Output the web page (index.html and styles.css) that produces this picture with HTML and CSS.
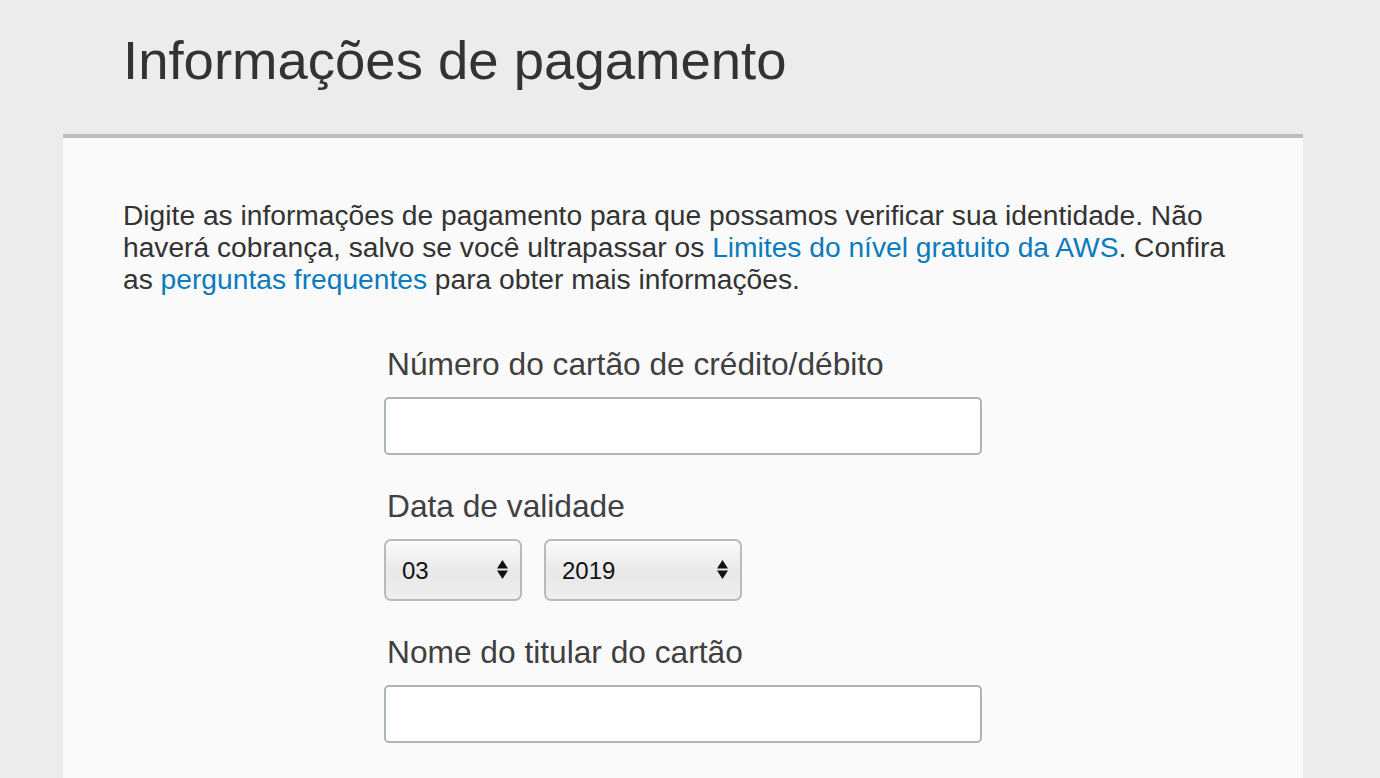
FILE: index.html
```html
<!DOCTYPE html>
<html lang="pt-BR">
<head>
<meta charset="utf-8">
<title>Informações de pagamento</title>
<link rel="stylesheet" href="styles.css">
</head>
<body>
<div class="page">
  <header class="header">
    <h1 class="title">Informações de pagamento</h1>
  </header>
  <main class="panel">
    <p class="intro">Digite as informações de pagamento para que possamos verificar sua identidade. Não haverá cobrança, salvo se você ultrapassar os <a href="#" class="link">Limites do nível gratuito da AWS</a>. Confira as <a href="#" class="link">perguntas frequentes</a> para obter mais informações.</p>
    <form class="form">
      <label class="label" for="card">Número do cartão de crédito/débito</label>
      <input class="field" id="card" type="text">
      <label class="label">Data de validade</label>
      <div class="selects">
        <div class="select-wrap month">
          <select class="select"><option>03</option></select>
          <span class="arrows"><svg width="11" height="19" viewBox="0 0 11 19"><path d="M5.5 0 L11 8.5 L0 8.5 Z M5.5 19 L11 10.5 L0 10.5 Z" fill="#111"/></svg></span>
        </div>
        <div class="select-wrap year">
          <select class="select"><option>2019</option></select>
          <span class="arrows"><svg width="11" height="19" viewBox="0 0 11 19"><path d="M5.5 0 L11 8.5 L0 8.5 Z M5.5 19 L11 10.5 L0 10.5 Z" fill="#111"/></svg></span>
        </div>
      </div>
      <label class="label" for="name">Nome do titular do cartão</label>
      <input class="field" id="name" type="text">
    </form>
  </main>
</div>
</body>
</html>
```
FILE: styles.css
```css
html, body {
  margin: 0;
  padding: 0;
  background: #ebeceb;
  font-family: "Liberation Sans", Arial, sans-serif;
  height: 100%;
}
.page {
  display: flex;
  flex-direction: column;
  min-height: 100%;
}
.header {
  height: 134px;
  padding-left: 123px;
  box-sizing: border-box;
}
.title {
  margin: 0;
  padding-top: 27px;
  font-size: 54.5px;
  line-height: 68px;
  font-weight: normal;
  color: #333;
}
.panel {
  margin-left: 63px;
  width: 1240px;
  flex: 1;
  background: #fafafa;
  border-top: 4px solid #bcbdbc;
  padding: 61px 60px 40px;
  box-sizing: border-box;
}
.intro {
  margin: 0;
  font-size: 28.2px;
  line-height: 32px;
  color: #333;
}
.link {
  color: #0a7bbd;
  text-decoration: none;
}
.form {
  margin: 51px 0 0 261px;
  display: flex;
  flex-direction: column;
  align-items: flex-start;
}
.label {
  display: block;
  margin-left: 3px;
  font-size: 31.7px;
  line-height: 36px;
  color: #404040;
  margin-bottom: 15px;
}
.field {
  width: 598px;
  height: 58px;
  box-sizing: border-box;
  border: 2px solid #a9b6b1;
  border-radius: 5px;
  background: #fff;
  margin: 0 0 33px 0;
  padding: 0 14px;
  font-size: 24px;
  font-family: inherit;
}
.selects {
  display: flex;
  gap: 22px;
  margin-bottom: 33px;
}
.select-wrap {
  position: relative;
  height: 62px;
}
.month { width: 138px; }
.year { width: 198px; }
.select {
  appearance: none;
  -webkit-appearance: none;
  width: 100%;
  height: 100%;
  box-sizing: border-box;
  border: 2px solid #b9bab9;
  border-radius: 7px;
  background: linear-gradient(#fafafa, #e8e8e8 55%, #efefef);
  box-shadow: inset 0 1px 0 #fff;
  padding: 0 0 0 16px;
  font-size: 24px;
  font-family: inherit;
  color: #111;
}
.arrows {
  position: absolute;
  right: 14px;
  top: 21px;
  pointer-events: none;
  line-height: 0;
}
```
